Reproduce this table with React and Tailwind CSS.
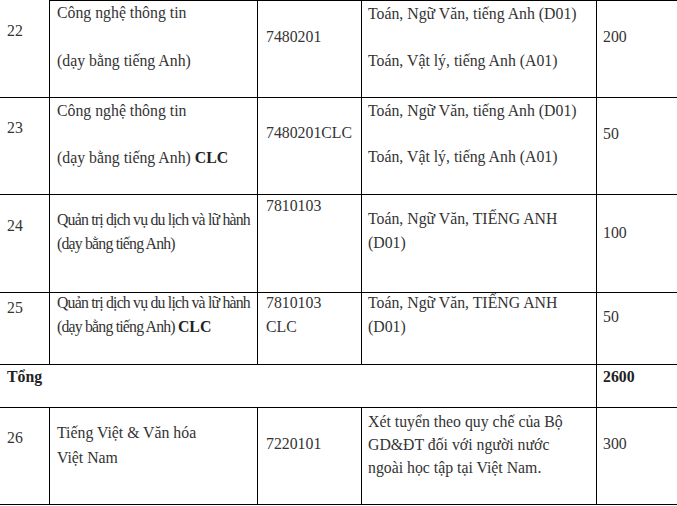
export default function App() {
  const c1 = "w-[49px] shrink-0 pl-[7px]";
  const c2 = "w-[208px] shrink-0 border-l border-black pl-[7px]";
  const c3 = "w-[104px] shrink-0 border-l border-black pl-[8px]";
  const c4 = "w-[235px] shrink-0 border-l border-black pl-[6px]";
  const c5 = "flex-1 border-l border-black pl-[6px]";
  const tight = "tracking-[-0.8px] whitespace-nowrap";
  return (
    <div className="w-[677px] h-[506px] overflow-hidden bg-white [font-family:'Liberation_Serif','Times_New_Roman',serif] text-[15.8px] leading-[24px] text-[#333]">
      {/* Row 22 */}
      <div className="flex h-[98px] border-b border-black">
        <div className={c1}><div className="pt-[19px]">22</div></div>
        <div className={`${c2} border-t`}>
          <div className="pt-[0px]">Công nghệ thông tin</div>
          <div className="mt-[24px]">(dạy bằng tiếng Anh)</div>
        </div>
        <div className={`${c3} border-t`}><div className="pt-[24px]">7480201</div></div>
        <div className={`${c4} border-t`}>
          <div className="pt-[1px]">Toán, Ngữ Văn, tiếng Anh (D01)</div>
          <div className="mt-[23px]">Toán, Vật lý, tiếng Anh (A01)</div>
        </div>
        <div className={`${c5} border-t`}><div className="pt-[24px]">200</div></div>
      </div>
      {/* Row 23 */}
      <div className="flex h-[97px] border-b border-black">
        <div className={c1}><div className="pt-[18px]">23</div></div>
        <div className={c2}>
          <div className="pt-[1px]">Công nghệ thông tin</div>
          <div className="mt-[23px]">(dạy bằng tiếng Anh) <b className="text-[#222]">CLC</b></div>
        </div>
        <div className={c3}><div className="pt-[23px]">7480201CLC</div></div>
        <div className={c4}>
          <div className="pt-[1px]">Toán, Ngữ Văn, tiếng Anh (D01)</div>
          <div className="mt-[22px]">Toán, Vật lý, tiếng Anh (A01)</div>
        </div>
        <div className={c5}><div className="pt-[24px]">50</div></div>
      </div>
      {/* Row 24 */}
      <div className="flex h-[98px] border-b border-black">
        <div className={c1}><div className="pt-[19px]">24</div></div>
        <div className={c2}>
          <div className={`pt-[13px] ${tight}`}>
            <div>Quản trị dịch vụ du lịch và lữ hành</div>
            <div>(dạy bằng tiếng Anh)</div>
          </div>
        </div>
        <div className={c3}><div className="pt-0 leading-[22px]">7810103</div></div>
        <div className={c4}>
          <div className="pt-[12px] whitespace-nowrap">
            <div>Toán, Ngữ Văn, TIẾNG ANH</div>
            <div>(D01)</div>
          </div>
        </div>
        <div className={c5}><div className="pt-[26px]">100</div></div>
      </div>
      {/* Row 25 */}
      <div className="flex h-[72px] border-b border-black">
        <div className={c1}><div className="pt-[3px]">25</div></div>
        <div className={c2}>
          <div className={`-mt-[2px] ${tight}`}>
            <div>Quản trị dịch vụ du lịch và lữ hành</div>
            <div>(dạy bằng tiếng Anh) <b className="text-[#222] tracking-normal">CLC</b></div>
          </div>
        </div>
        <div className={c3}>
          <div className="-mt-[2px]">
            <div>7810103</div>
            <div>CLC</div>
          </div>
        </div>
        <div className={c4}>
          <div className="-mt-[2px] whitespace-nowrap">
            <div>Toán, Ngữ Văn, TIẾNG ANH</div>
            <div>(D01)</div>
          </div>
        </div>
        <div className={c5}><div className="pt-[12px]">50</div></div>
      </div>
      {/* Total */}
      <div className="flex h-[43px] border-b border-black">
        <div className="w-[596px] shrink-0 pl-[7px]"><b className="text-[#222]">Tổng</b></div>
        <div className={c5}><b className="text-[#222]">2600</b></div>
      </div>
      {/* Row 26 */}
      <div className="flex h-[97px] border-b border-black">
        <div className={c1}><div className="pt-[18px]">26</div></div>
        <div className={c2}>
          <div className="pt-[12px] leading-[25px] whitespace-nowrap">
            <div>Tiếng Việt &amp; Văn hóa</div>
            <div>Việt Nam</div>
          </div>
        </div>
        <div className={c3}><div className="pt-[24px]">7220101</div></div>
        <div className={c4}>
          <div className="pt-[2px] leading-[23px] whitespace-nowrap">
            <div>Xét tuyển theo quy chế của Bộ</div>
            <div>GD&amp;ĐT đối với người nước</div>
            <div>ngoài học tập tại Việt Nam.</div>
          </div>
        </div>
        <div className={c5}><div className="pt-[24px]">300</div></div>
      </div>
    </div>
  );
}
